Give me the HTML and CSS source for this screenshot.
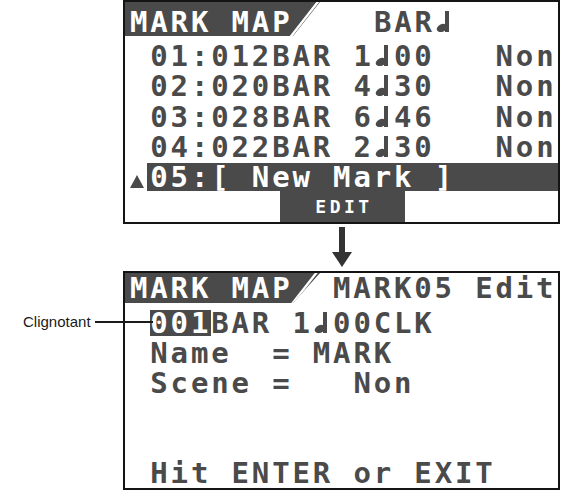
FILE: index.html
```html
<!DOCTYPE html>
<html lang="fr">
<head>
    <meta charset="UTF-8">
    <meta name="viewport" content="width=device-width, initial-scale=1.0">
    <title>MARK MAP</title>
    <link rel="stylesheet" href="styles.css">
</head>
<body>
<div class="page">

    <!-- mark list screen -->
    <section class="lcd lcd-list">
        <div class="lcd-head">
            <span class="tab">MARK MAP</span>
            <span class="head-info">BAR<span class="note"><svg width="15" height="21" viewBox="0 0 15 21"><rect x="10" y="0" width="4" height="21"/><ellipse cx="7" cy="17" rx="5.5" ry="3.8" transform="rotate(-25 7 17)"/></svg></span></span>
        </div>
        <div class="lcd-body">
            <div class="row"> 01:012BAR 1<span class="note"><svg width="15" height="21" viewBox="0 0 15 21"><rect x="10" y="0" width="4" height="21"/><ellipse cx="7" cy="17" rx="5.5" ry="3.8" transform="rotate(-25 7 17)"/></svg></span>00   Non</div>
            <div class="row"> 02:020BAR 4<span class="note"><svg width="15" height="21" viewBox="0 0 15 21"><rect x="10" y="0" width="4" height="21"/><ellipse cx="7" cy="17" rx="5.5" ry="3.8" transform="rotate(-25 7 17)"/></svg></span>30   Non</div>
            <div class="row"> 03:028BAR 6<span class="note"><svg width="15" height="21" viewBox="0 0 15 21"><rect x="10" y="0" width="4" height="21"/><ellipse cx="7" cy="17" rx="5.5" ry="3.8" transform="rotate(-25 7 17)"/></svg></span>46   Non</div>
            <div class="row"> 04:022BAR 2<span class="note"><svg width="15" height="21" viewBox="0 0 15 21"><rect x="10" y="0" width="4" height="21"/><ellipse cx="7" cy="17" rx="5.5" ry="3.8" transform="rotate(-25 7 17)"/></svg></span>30   Non</div>
            <div class="row row-sel">
                <span class="cursor">
                    <svg width="14" height="13" viewBox="0 0 14 13"><polygon points="7,0 14,13 0,13" fill="#4a4a4a"/></svg>
                </span>
                <span class="sel">05:[ New Mark ]</span>
            </div>
        </div>
        <div class="softkeys"><span class="softkey">EDIT</span></div>
    </section>

    <div class="arrow">
        <svg width="24" height="47" viewBox="0 0 24 47">
            <rect x="9" y="3" width="6" height="27" fill="#333"/>
            <polygon points="2,28 22,28 12,43" fill="#333"/>
        </svg>
    </div>

    <!-- edit screen -->
    <div class="edit-wrap">
        <div class="callout">
            <span class="callout-text">Clignotant</span>
            <i class="callout-line"></i>
        </div>
        <section class="lcd lcd-edit">
            <div class="lcd-head">
                <span class="tab">MARK MAP</span>
                <span class="head-info">MARK05 Edit</span>
            </div>
            <div class="lcd-body">
                <div class="row"> <span class="blink">001</span>BAR 1<span class="note"><svg width="15" height="21" viewBox="0 0 15 21"><rect x="10" y="0" width="4" height="21"/><ellipse cx="7" cy="17" rx="5.5" ry="3.8" transform="rotate(-25 7 17)"/></svg></span>00CLK</div>
                <div class="row"> Name  = MARK</div>
                <div class="row"> Scene =   Non</div>
                <div class="row"> </div>
                <div class="row"> </div>
                <div class="row"> Hit ENTER or EXIT</div>
            </div>
        </section>
    </div>

</div>
</body>
</html>
```

FILE: styles.css
```css
body {
    margin: 0;
    background: #ffffff;
}

.page {
    width: 562px;
    height: 492px;
    overflow: hidden;
}

/* LCD frame, 20.3px character grid */
.lcd {
    margin-left: 123px;
    width: 433px;
    border: 2px solid #141414;
    background: #ffffff;
    color: #4a4a4a;
    font-family: "DejaVu Sans Mono", monospace;
    font-size: 29px;
    font-weight: bold;
    letter-spacing: 2.85px;
}

.tab,
.head-info,
.row,
.sel {
    white-space: pre;
}

.lcd-head {
    display: flex;
    height: 34px;
    line-height: 28px;
}

.lcd-head > span {
    padding-top: 6px;
}

.lcd-edit .lcd-head {
    height: 30px;
    line-height: 30px;
}

.lcd-edit .lcd-head > span {
    padding-top: 0;
}

.tab {
    position: relative;
    width: 190px;
    padding-left: 5px;
    background: #4a4a4a;
    color: #ffffff;
    clip-path: polygon(0 0, 100% 0, calc(100% - 27px) 100%, 0 100%);
}

/* thin white slash at the end of the tab */
.tab::after {
    content: "";
    position: absolute;
    top: 0;
    bottom: 0;
    right: 14px;
    width: 3px;
    background: #ffffff;
    transform: skewX(-38deg);
}

.lcd-list .head-info {
    margin-left: 54px;
}

.lcd-edit .head-info {
    margin-left: 13px;
}

/* quarter-note glyph, one grid cell wide */
.note {
    display: inline-block;
    width: 20.3px;
    letter-spacing: 0;
}

.note svg {
    fill: #4a4a4a;
    vertical-align: baseline;
}

.lcd-body {
    padding: 4.5px 0 0 5px;
}

.lcd-edit .lcd-body {
    padding-top: 5px;
}

.row {
    height: 30.5px;
    line-height: 30.5px;
}

.lcd-edit .row {
    height: 30px;
    line-height: 30px;
}

.row-sel {
    display: flex;
    height: 28px;
    line-height: 28px;
    margin-top: 0.5px;
}

.cursor {
    width: 17px;
    display: flex;
    align-items: flex-end;
    padding-bottom: 3px;
    box-sizing: border-box;
}

.cursor svg {
    display: block;
}

.sel {
    flex: 1;
    padding-left: 3.3px;
    background: #4a4a4a;
    color: #ffffff;
}

.softkeys {
    display: flex;
    height: 31px;
}

.softkey {
    margin-left: 155px;
    width: 125px;
    padding-left: 3px;
    box-sizing: border-box;
    background: #4a4a4a;
    color: #ffffff;
    font-size: 18px;
    letter-spacing: 3.5px;
    line-height: 31px;
    text-align: center;
}

.blink {
    display: inline-block;
    line-height: 26px;
    background: #4a4a4a;
    color: #ffffff;
}

.arrow {
    padding-left: 330px;
    height: 47px;
}

.arrow svg {
    display: block;
}

.edit-wrap {
    position: relative;
}

/* annotation pointing at the blinking field */
.callout {
    position: absolute;
    left: 23px;
    top: 42px;
    display: flex;
    align-items: center;
    z-index: 1;
}

.callout-text {
    font-family: "Liberation Sans", Arial, sans-serif;
    font-size: 15px;
    font-weight: normal;
    color: #1a1a1a;
}

.callout-line {
    width: 58px;
    height: 2px;
    margin-left: 4px;
    background: #1a1a1a;
}
```
